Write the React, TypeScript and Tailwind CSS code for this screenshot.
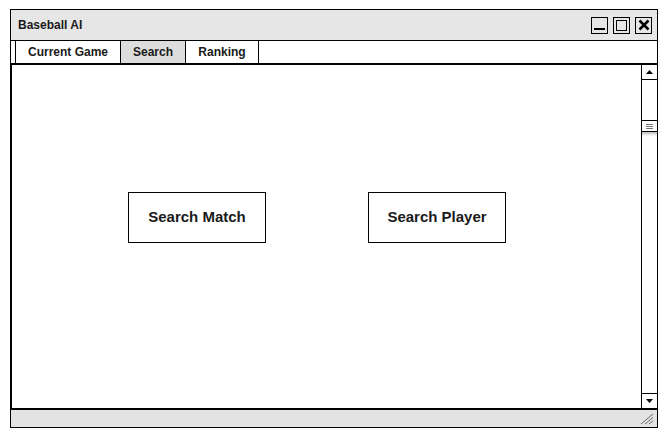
import React from 'react';

const font = { fontFamily: '"Liberation Sans", Arial, sans-serif' };

function WindowButton({ kind }: { kind: 'min' | 'max' | 'close' }) {
  return (
    <div className="w-[17px] h-[17px] border border-black bg-[#e6e6e6] flex items-center justify-center">
      {kind === 'min' && <div className="w-[11px] h-[2px] bg-black mt-[8px]" />}
      {kind === 'max' && <div className="w-[11px] h-[11px] border border-black" />}
      {kind === 'close' && (
        <svg width="12" height="12" viewBox="0 0 12 12">
          <path d="M1.5 1.5L10.5 10.5M10.5 1.5L1.5 10.5" stroke="black" strokeWidth="2.6" />
        </svg>
      )}
    </div>
  );
}

export default function App() {
  const tabs = ['Current Game', 'Search', 'Ranking'];
  return (
    <div className="w-[668px] h-[435px] bg-white pl-[10px] pt-[9px]" style={font}>
      <div className="w-[648px] h-[419px] border border-black flex flex-col">
        {/* Title bar */}
        <div className="h-[31px] bg-[#e6e6e6] border-b border-black flex items-center pl-[7px] pr-[5px]">
          <span className="text-[12px] font-bold text-[#1a1a1a]">Baseball AI</span>
          <div className="ml-auto flex gap-[5px]">
            <WindowButton kind="min" />
            <WindowButton kind="max" />
            <WindowButton kind="close" />
          </div>
        </div>
        {/* Tabs */}
        <div className="h-[22px] flex pl-[4px]">
          {tabs.map((t) => (
            <div
              key={t}
              className={`h-full border-l border-black last:border-r flex items-center justify-center text-[12px] font-bold text-[#1a1a1a] ${
                t === 'Search' ? 'bg-[#dddddd] w-[65px]' : t === 'Current Game' ? 'w-[105px]' : 'w-[74px]'
              }`}
            >
              {t}
            </div>
          ))}
        </div>
        {/* Content */}
        <div className="flex-1 border-t-2 border-b-2 border-l border-black flex">
          <div className="flex-1 flex items-start pt-[127px] pl-[116px] gap-[102px]">
            <button className="w-[138px] h-[51px] border border-black bg-white text-[15px] font-bold text-[#1a1a1a]">
              Search Match
            </button>
            <button className="w-[138px] h-[51px] border border-black bg-white text-[15px] font-bold text-[#1a1a1a]">
              Search Player
            </button>
          </div>
          {/* Scrollbar */}
          <div className="w-[16px] border-l border-black flex flex-col">
            <div className="h-[15px] border-b border-black flex items-center justify-center">
              <svg width="7" height="4" viewBox="0 0 7 4"><path d="M0 4L3.5 0L7 4Z" fill="black" /></svg>
            </div>
            <div className="flex-1 flex flex-col">
              <div className="h-[40px]" />
              <div className="h-[12px] border-t border-b border-black flex flex-col items-center justify-center gap-[1px] bg-white">
                <div className="w-[7px] h-px bg-[#777]" />
                <div className="w-[7px] h-px bg-[#777]" />
                <div className="w-[7px] h-px bg-[#777]" />
              </div>
              <div className="h-[4px] bg-gradient-to-b from-[#bbb] to-white" />
            </div>
            <div className="h-[15px] border-t border-black flex items-center justify-center">
              <svg width="7" height="4" viewBox="0 0 7 4"><path d="M0 0L3.5 4L7 0Z" fill="black" /></svg>
            </div>
          </div>
        </div>
        {/* Status bar */}
        <div className="h-[17px] bg-[#e3e3e3] flex items-end justify-end pr-[3px] pb-[2px]">
          <svg width="14" height="12" viewBox="0 0 14 12">
            <path d="M1 11L13 1M5 11L13 4.5M9 11L13 8" stroke="#666" strokeWidth="1" />
          </svg>
        </div>
      </div>
    </div>
  );
}
